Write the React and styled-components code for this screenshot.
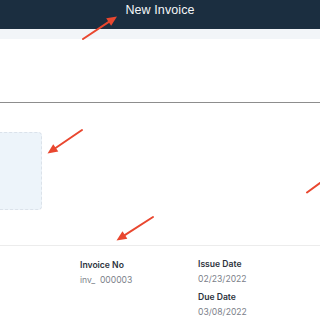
import React from 'react'
import styled, { createGlobalStyle } from 'styled-components'

const GlobalStyle = createGlobalStyle`
  html, body {
    margin: 0;
    padding: 0;
    background: #ffffff;
  }
  body {
    font-family: Inter, "Noto Sans", "Liberation Sans", sans-serif;
    -webkit-font-smoothing: antialiased;
  }
`

const Page = styled.div`
  position: relative;
  width: 320px;
  height: 320px;
  overflow: hidden;
  background: #ffffff;
`

const Header = styled.header`
  height: 29px;
  box-sizing: border-box;
  padding-top: 3px;
  background: #1b2e40;
  display: flex;
  align-items: flex-start;
  justify-content: center;
`

const Title = styled.h1`
  margin: 0;
  color: #f4f6f8;
  font-family: "Liberation Sans", Arial, sans-serif;
  font-size: 12.5px;
  line-height: 14px;
  font-weight: 400;
  letter-spacing: 0.1px;
`

const SubBar = styled.div`
  height: 10px;
  background: #f2f5f8;
`

const TopSection = styled.section`
  height: 63px;
  border-bottom: 1.5px solid #8d8d8d;
`

const Body = styled.div`
  padding-top: 29px;
`

const LogoDrop = styled.div`
  margin-left: -10px;
  width: 50px;
  height: 76px;
  background: #edf4fa;
  border: 1px dashed #dbe2ea;
  border-radius: 4px;
`

const Divider = styled.hr`
  margin: 35px 0 0;
  border: 0;
  border-top: 1px solid #ececec;
`

const Details = styled.div`
  display: grid;
  grid-template-columns: 118px 1fr;
  padding: 12px 0 0 80px;
`

const Column = styled.div`
  display: flex;
  flex-direction: column;
  gap: 6px;
`

const Field = styled.div`
  display: flex;
  flex-direction: column;
  gap: 3px;
  margin-top: ${p => p.$shift || 0}px;
`

const Label = styled.span`
  font-size: 8.6px;
  line-height: 12px;
  font-weight: 600;
  color: #2c323c;
`

const Value = styled.span`
  font-size: 8.6px;
  line-height: 12px;
  font-weight: 400;
  color: #7b8089;
  white-space: pre;
`

const Overlay = styled.svg`
  position: absolute;
  left: 0;
  top: 0;
  pointer-events: none;
`

function Arrow({ from, to, head = true }) {
  const [x1, y1] = from
  const [x2, y2] = to
  const dx = x2 - x1
  const dy = y2 - y1
  const len = Math.hypot(dx, dy)
  const ux = dx / len
  const uy = dy / len
  const hl = 10
  const hw = 4.5
  const bx = x2 - ux * hl
  const by = y2 - uy * hl
  const points = [
    `${x2},${y2}`,
    `${bx - uy * hw},${by + ux * hw}`,
    `${bx + uy * hw},${by - ux * hw}`,
  ].join(' ')
  return (
    <g>
      <line
        x1={x1} y1={y1}
        x2={head ? bx + ux * 2 : x2} y2={head ? by + uy * 2 : y2}
        stroke="#e9472f" strokeWidth="2" strokeLinecap="round"
      />
      {head && <polygon points={points} fill="#e9472f" />}
    </g>
  )
}

export default function App() {
  return (
    <Page>
      <GlobalStyle />
      <Header>
        <Title>New Invoice</Title>
      </Header>
      <SubBar />
      <TopSection />
      <Body>
        <LogoDrop />
        <Divider />
        <Details>
          <Column>
            <Field $shift={1}>
              <Label>Invoice No</Label>
              <Value>{'inv_  000003'}</Value>
            </Field>
          </Column>
          <Column>
            <Field>
              <Label>Issue Date</Label>
              <Value>02/23/2022</Value>
            </Field>
            <Field>
              <Label>Due Date</Label>
              <Value>03/08/2022</Value>
            </Field>
          </Column>
        </Details>
      </Body>
      <Overlay width="320" height="320" viewBox="0 0 320 320">
        <Arrow from={[83, 39]} to={[117, 16.5]} />
        <Arrow from={[82, 130]} to={[47.5, 153.5]} />
        <Arrow from={[153, 217]} to={[116.5, 240.5]} />
        <Arrow from={[307, 192.5]} to={[324, 180]} head={false} />
      </Overlay>
    </Page>
  )
}
